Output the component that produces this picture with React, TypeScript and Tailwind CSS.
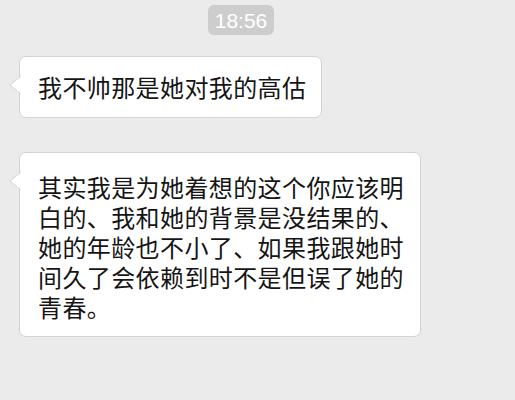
import React from 'react';

const Tail: React.FC = () => (
  <svg
    width="12"
    height="20"
    viewBox="0 0 12 20"
    className="absolute left-[-11px] top-[18px]"
  >
    <path d="M12 1 L1 10 L12 19" fill="#ffffff" stroke="#d3d3d3" strokeWidth="1" />
  </svg>
);

const Bubble: React.FC<{ className?: string; children: React.ReactNode }> = ({ className = '', children }) => (
  <div
    className={`relative ml-[19px] bg-white border border-[#d3d3d3] rounded-[7px] text-[#151515] text-[24px] leading-[30px] tracking-[0.4px] ${className}`}
  >
    <Tail />
    {children}
  </div>
);

export default function App() {
  return (
    <div
      className="w-[515px] h-[400px] bg-[#ebebeb] overflow-hidden pt-[5px] flex flex-col items-start"
      style={{ fontFamily: '"Noto Sans CJK SC", "Noto Sans", sans-serif' }}
    >
      <div className="ml-[208px] w-[66px] h-[30px] rounded-[6px] bg-[#cdcdcd] text-white text-[21px] leading-none flex items-center justify-center font-['Liberation_Sans',sans-serif]">
        18:56
      </div>

      <Bubble className="mt-[21px] w-[303px] pl-[18px] pr-[14px] pt-[15px] pb-[15px]">
        我不帅那是她对我的高估
      </Bubble>

      <Bubble className="mt-[34px] w-[402px] pl-[18px] pr-[14px] pt-[19px] pb-[14px]">
        其实我是为她着想的这个你应该明白的、我和她的背景是没结果的、她的年龄也不小了、如果我跟她时间久了会依赖到时不是但误了她的青春。
      </Bubble>
    </div>
  );
}
